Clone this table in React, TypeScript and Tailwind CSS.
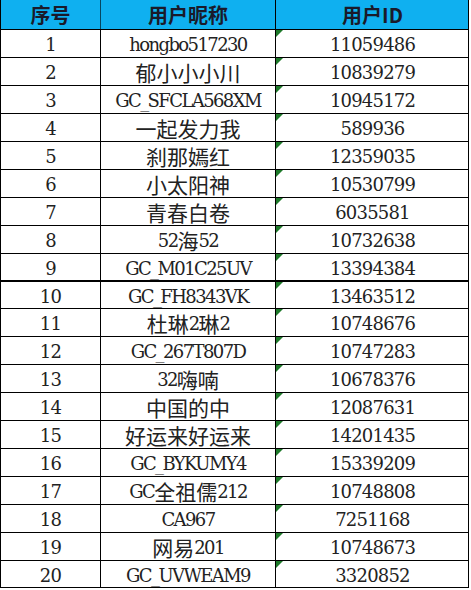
import React from "react"

const ROWS: [string, string][] = [
  ["hongbo517230", "11059486"],
  ["郁小小小川", "10839279"],
  ["GC_SFCLA568XM", "10945172"],
  ["一起发力我", "589936"],
  ["刹那嫣红", "12359035"],
  ["小太阳神", "10530799"],
  ["青春白卷", "6035581"],
  ["52海52", "10732638"],
  ["GC_M01C25UV", "13394384"],
  ["GC_FH8343VK", "13463512"],
  ["杜琳2琳2", "10748676"],
  ["GC_267T807D", "10747283"],
  ["32嗨喃", "10678376"],
  ["中国的中", "12087631"],
  ["好运来好运来", "14201435"],
  ["GC_BYKUMY4", "15339209"],
  ["GC全祖儒212", "10748808"],
  ["CA967", "7251168"],
  ["网易201", "10748673"],
  ["GC_UVWEAM9", "3320852"],
]

// ascii in a serif face, CJK in the CJK family at full size; runs centred on one line
function CellText({ text, tight = false }: { text: string; tight?: boolean }) {
  const runs = text.match(/[\x00-\x7f]+|[^\x00-\x7f]+/g) ?? []
  return (
    <span className="inline-flex items-center whitespace-nowrap">
      {runs.map((r, i) =>
        /^[\x00-\x7f]/.test(r) ? (
          <span
            key={i}
            className={tight ? "font-['DejaVu_Serif'] text-[18px] tracking-[-1.6px]" : "font-['DejaVu_Serif'] text-[18px] tracking-[-0.8px]"}
          >
            {r}
          </span>
        ) : (
          <span key={i} className="font-['Noto_Sans_CJK_SC'] text-[21px] pb-[2px]">
            {r}
          </span>
        )
      )}
    </span>
  )
}

function rowHeight(i: number) {
  if (i === 9 || i === 19) return "h-[27px]"
  return "h-[28px]"
}

export default function App() {
  return (
    <div className="w-[471px] h-[590px] bg-white">
      <div className="w-[469px] border-l border-r border-black text-[#222]">
        {/* header */}
        <div className="grid grid-cols-[100px_175px_193px] h-[30px] bg-[#0fb0f0] border-b border-black font-['Noto_Sans_CJK_SC'] font-bold text-[20px] text-[#1a1a2a]">
          <div className="flex items-center justify-center border-r border-black/60">序号</div>
          <div className="flex items-center justify-center border-r border-black">用户昵称</div>
          <div className="flex items-center justify-center">用户ID</div>
        </div>

        {ROWS.map(([name, id], i) => (
          <div
            key={i}
            className={`grid grid-cols-[100px_175px_193px] ${rowHeight(i)} ${i === 8 ? "border-b-2" : "border-b"} border-black leading-none`}
          >
            <div className="flex items-center justify-center border-r border-black pt-[3px]">
              <CellText text={String(i + 1)} />
            </div>
            <div className="flex items-center justify-center border-r border-black pt-[3px]">
              <CellText text={name} tight />
            </div>
            <div className="relative flex items-center justify-center pt-[3px]">
              <svg className="absolute left-0 top-0" width="7" height="7" viewBox="0 0 7 7">
                <polygon points="0,0 7,0 0,7" fill="#1e7a2a" />
              </svg>
              <CellText text={id} />
            </div>
          </div>
        ))}
      </div>
    </div>
  )
}
